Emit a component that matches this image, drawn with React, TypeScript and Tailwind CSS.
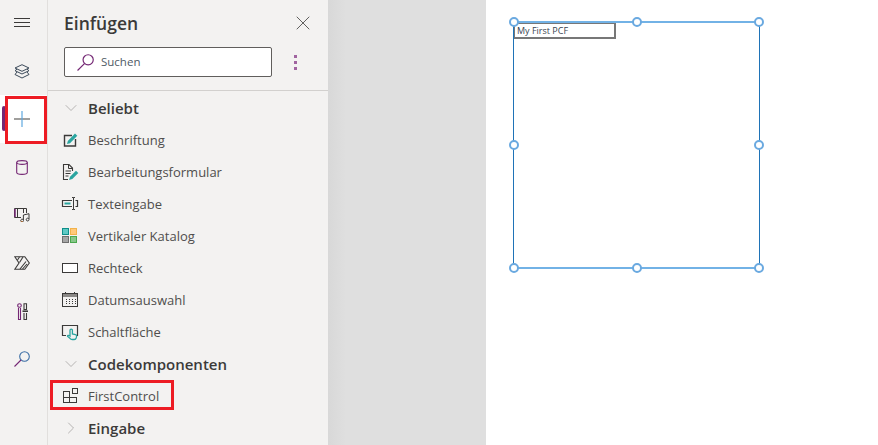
import React from 'react';
import { X, ChevronDown, ChevronRight } from 'lucide-react';

const PURPLE = '#742774';
const TEAL = '#2aa5a0';
const DARK = '#3b3a39';

function RailIcon({ children, active }: { children: React.ReactNode; active?: boolean }) {
  return (
    <div className={active ? 'relative h-12 w-[47px] pr-[3px] flex items-center justify-center bg-white' : 'h-12 w-[47px] pr-[3px] flex items-center justify-center'}>
      {children}
    </div>
  );
}

// Item icons, all drawn on a 20x20 box
const icons: Record<string, React.ReactNode> = {
  label: (
    <svg width="20" height="20" viewBox="0 0 20 20" fill="none">
      <path d="M12 5.500H4.500v10.500h11V9" stroke={DARK} strokeWidth="1.400" />
      <path d="M7 14l.8-3L15 3.500 17.300 5.800 10 13.200z" fill={TEAL} />
    </svg>
  ),
  form: (
    <svg width="20" height="20" viewBox="0 0 20 20" fill="none">
      <path d="M8 17.500H3.500v-15h5.500l3.500 3.500v3" stroke={DARK} strokeWidth="1.100" />
      <path d="M8.500 2.500V6.500h4" stroke={DARK} strokeWidth="1" />
      <path d="M5.500 9h5.500M5.500 11.500h5M5.500 14h3" stroke={DARK} strokeWidth="1" />
      <path d="M9 18l1-3.200 6-6 2.300 2.300-6 6z" fill={TEAL} />
    </svg>
  ),
  input: (
    <svg width="20" height="20" viewBox="0 0 20 20" fill="none">
      <path d="M12 6.500H2.500v6H12M15.500 6.500h2v6h-2" stroke={DARK} strokeWidth="1.200" />
      <rect x="4.500" y="8.500" width="6" height="2" fill={TEAL} />
      <path d="M12 3.500h1.500v12H12m3 0h-1.500M15 3.500h-1.500" stroke={DARK} strokeWidth="1" />
    </svg>
  ),
  gallery: (
    <svg width="20" height="20" viewBox="0 0 20 20" fill="none" shapeRendering="crispEdges">
      <rect x="2.500" y="2.500" width="6" height="6" fill="#5fc9c4" stroke="#0f8f8a" />
      <rect x="10.500" y="2.500" width="6" height="6" fill="#ffc97a" stroke="#f2b24a" />
      <rect x="2.500" y="10.500" width="6" height="6" fill="#a6a6a6" stroke="#6e6e6e" />
      <rect x="10.500" y="10.500" width="6" height="6" fill="#88c78a" stroke="#4aa84e" />
    </svg>
  ),
  rect: (
    <svg width="20" height="20" viewBox="0 0 20 20" fill="none" shapeRendering="crispEdges">
      <rect x="2.500" y="5.500" width="15" height="9" fill="#fff" stroke={DARK} strokeWidth="1" />
    </svg>
  ),
  date: (
    <svg width="20" height="20" viewBox="0 0 20 20" fill="none" shapeRendering="crispEdges">
      <rect x="2.500" y="3.500" width="15" height="13" stroke={DARK} />
      <rect x="3" y="4" width="14" height="3" fill="#8a8886" />
      <path d="M5.500 2v2M14.500 2v2" stroke={DARK} />
      <path d="M6 9h1M9 9h1M12 9h1M15 9h1M6 11h1M9 11h1M12 11h1M15 11h1M6 13h1M9 13h1M12 13h1M15 13h1" stroke={DARK} />
    </svg>
  ),
  button: (
    <svg width="20" height="20" viewBox="0 0 20 20" fill="none">
      <path d="M6 13.500H2.500v-10h15v10H16" stroke={DARK} strokeWidth="1.200" />
      <path d="M10 14V8.300a1.200 1.200 0 0 1 2.400 0V12l3 .7c.9.2 1.300.8 1.200 1.600l-.4 1.700c-.3 1-1 1.500-2 1.500h-2c-1 0-1.700-.4-2.300-1.200L7.600 14.400c-.4-1 .8-1.500 2.400-.4z" fill="#f3f2f1" stroke={TEAL} strokeWidth="1.300" />
    </svg>
  ),
  code: (
    <svg width="20" height="20" viewBox="0 0 20 20" fill="none" shapeRendering="crispEdges">
      <path d="M3.500 5.500h6v11h-6zM3.500 11.500h12.500v5h-6.500" stroke={DARK} />
      <rect x="12.500" y="2.500" width="5" height="5" stroke={DARK} />
    </svg>
  ),
};

function Section({ label, open = true }: { label: string; open?: boolean }) {
  return (
    <div className="h-8 flex items-center pl-4 shrink-0">
      <div className="w-6 flex shrink-0">
        <div className="-ml-[3px]">
          {open ? (
            <ChevronDown size={20} strokeWidth={0.9} color="#a19f9d" />
          ) : (
            <ChevronRight size={20} strokeWidth={0.9} color="#a19f9d" />
          )}
        </div>
      </div>
      <span className="text-[15px] font-semibold text-[#3b3a39]">{label}</span>
    </div>
  );
}

function Item({ icon, label }: { icon: string; label: string }) {
  return (
    <div className="h-8 flex items-center pl-3 gap-[8px] shrink-0">
      {icons[icon]}
      <span className="text-[13px] text-[#4f4e4d] mt-[2px]">{label}</span>
    </div>
  );
}

function Handle({ className }: { className: string }) {
  return <div className={'absolute w-[10px] h-[10px] rounded-full bg-white border-2 border-[#6aa9e0] ' + className} />;
}

export default function App() {
  return (
    <div className="w-[878px] h-[445px] flex overflow-hidden bg-white font-['Open_Sans','Noto_Sans',sans-serif]">
      {/* left rail */}
      <div className="relative w-[48px] shrink-0 bg-[#f3f2f1] border-r border-[#e1dfdd] flex flex-col">
        <div className="-mt-px">
          <RailIcon>
            <svg width="16" height="10" viewBox="0 0 16 10" stroke="#3b3a39" strokeWidth="1">
              <path d="M0 .5h16M0 4.500h16M0 8.500h16" />
            </svg>
          </RailIcon>
          <RailIcon>
            <svg width="16" height="15" viewBox="0 0 16 15" fill="none" stroke="#3b4a5a" strokeWidth="1">
              <path d="M8 .7l7 3.300-7 3.300-7-3.300z" />
              <path d="M3 5.200L1 6.700l7 3.300 7-3.300-2-1.500" />
              <path d="M3 8L1 10.500l7 3.500 7-3.500L13 8" />
            </svg>
          </RailIcon>
          <RailIcon active>
            <div className="absolute left-[2px] top-[11px] w-[4px] h-[25px] rounded-[2px] bg-[#742774]" />
            <svg width="16" height="16" viewBox="0 0 16 16" strokeWidth="1.200">
              <path d="M0 8h16" stroke="#605e5c" />
              <path d="M8 0v16" stroke="#5ea8e0" />
            </svg>
          </RailIcon>
          <RailIcon>
            <svg width="12" height="15" viewBox="0 0 12 15" fill="none" strokeWidth="1.100">
              <ellipse cx="6" cy="2.500" rx="5.300" ry="1.900" stroke={PURPLE} />
              <path d="M.7 2.500v10c0 1 2.400 1.900 5.300 1.900s5.300-.9 5.300-1.900v-10" stroke={PURPLE} />
            </svg>
          </RailIcon>
          <RailIcon>
            <svg width="16" height="14" viewBox="0 0 16 14" fill="none" strokeWidth="1">
              <path d="M7 9.500H.5v-9h12V5" stroke={DARK} />
              <path d="M1 1v8" stroke={PURPLE} strokeWidth="1.500" />
              <path d="M3.500 1v8M9.500 1v4" stroke={DARK} />
              <path d="M9.500 12.300a1.400 1.400 0 1 1-.1-.3V7l5.600-1.300v5.600a1.400 1.400 0 1 1-.1-.3" stroke="#3b3a39" />
              <path d="M8.800 13.300a1 1 0 0 1-1.800-.5" stroke="#b5651d" />
            </svg>
          </RailIcon>
          <RailIcon>
            <svg width="16" height="14" viewBox="0 0 16 14" fill="none" stroke={DARK} strokeWidth="1.100">
              <path d="M.8 .7h10L15.300 7l-4.500 6.300H.8L5 7z" />
              <path d="M5.500 6.500L9 1M6 13l6-7.500M3.500 4L5.500 1M8.500 13l4.500-5" />
            </svg>
          </RailIcon>
          <RailIcon>
            <svg width="11" height="17" viewBox="0 0 11 17" fill="none" strokeWidth="1.100">
              <path d="M1.500 5v11.500h2V5" stroke={PURPLE} />
              <circle cx="2.500" cy="2.500" r="1.800" stroke={PURPLE} />
              <path d="M7 .8h2.500V6.500H7zM7 10v6.500h2.500V10" stroke={DARK} />
              <path d="M5.500 8.200h5.500" stroke={DARK} strokeWidth="1.600" />
            </svg>
          </RailIcon>
          <RailIcon>
            <svg width="16" height="16" viewBox="0 0 16 16" fill="none" strokeWidth="1.100">
              <circle cx="10.500" cy="5.500" r="4.800" stroke="#3b6ea5" />
              <path d="M7 9L.5 15.500" stroke={PURPLE} />
            </svg>
          </RailIcon>
        </div>
        {/* red highlight on the plus button */}
        <div className="absolute left-[5px] top-[96px] w-[42px] h-[48px] border-[3px] border-[#ed1c24]" />
      </div>

      {/* insert panel */}
      <div className="relative w-[280px] shrink-0 bg-[#f3f2f1] flex flex-col">
        <div className="h-[47px] shrink-0 flex items-center justify-between pl-4 pr-[13px]">
          <span className="text-[17.5px] font-semibold text-[#3b3a39]">Einfügen</span>
          <X size={24} strokeWidth={0.8} color="#3b3a39" className="-mt-[2px]" />
        </div>
        <div className="flex items-center pl-4 shrink-0">
          <div className="w-[208px] h-[30px] rounded-[2px] border border-[#605e5c] bg-white flex items-center pl-[12px] gap-[7px]">
            <svg width="17" height="17" viewBox="0 0 16 16" fill="none" strokeWidth="1.100">
              <circle cx="10.500" cy="5.500" r="4.800" stroke={PURPLE} />
              <path d="M7 9L.5 15.500" stroke={PURPLE} />
            </svg>
            <span className="text-[11.5px] text-[#4f5a66]">Suchen</span>
          </div>
          <div className="ml-[22px] flex flex-col gap-[3px]">
            <div className="w-[2.500px] h-[3px] bg-[#a064a0]" />
            <div className="w-[2.500px] h-[3px] bg-[#a064a0]" />
            <div className="w-[2.500px] h-[3px] bg-[#a064a0]" />
          </div>
        </div>
        <div className="h-[14px] shrink-0 border-b border-[#d2d0ce]" />
        <div className="h-px shrink-0" />
        <Section label="Beliebt" />
        <Item icon="label" label="Beschriftung" />
        <Item icon="form" label="Bearbeitungsformular" />
        <Item icon="input" label="Texteingabe" />
        <Item icon="gallery" label="Vertikaler Katalog" />
        <Item icon="rect" label="Rechteck" />
        <Item icon="date" label="Datumsauswahl" />
        <Item icon="button" label="Schaltfläche" />
        <Section label="Codekomponenten" />
        <Item icon="code" label="FirstControl" />
        <Section label="Eingabe" open={false} />
        <div className="absolute left-[2px] top-[380px] w-[124px] h-[30px] border-[3px] border-[#ed1c24]" />
      </div>

      {/* gray studio area */}
      <div className="w-[158px] shrink-0 flex bg-[#dfdfdf]">
        <div className="w-[18px] bg-gradient-to-r from-[#d8d8d8] to-[#dfdfdf]" />
      </div>

      {/* canvas */}
      <div className="relative flex-1 bg-white">
        <div className="absolute left-[27px] top-[21px] w-[247px] h-[248px] border-x border-x-[#1f73b7] border-y-2 border-y-[#72b2e6]" />
        <div className="absolute left-[28px] top-[23px] w-[102px] h-[16px] border border-[#777] border-b-2 border-r-2 bg-white flex items-center pl-[2px]">
          <span className="text-[9px] leading-none text-[#3a4450]">My First PCF</span>
        </div>
        <Handle className="left-[23px] top-[17px]" />
        <Handle className="left-[146px] top-[17px]" />
        <Handle className="left-[268px] top-[17px]" />
        <Handle className="left-[23px] top-[140px]" />
        <Handle className="left-[268px] top-[140px]" />
        <Handle className="left-[23px] top-[263px]" />
        <Handle className="left-[146px] top-[263px]" />
        <Handle className="left-[268px] top-[263px]" />
      </div>
    </div>
  );
}
